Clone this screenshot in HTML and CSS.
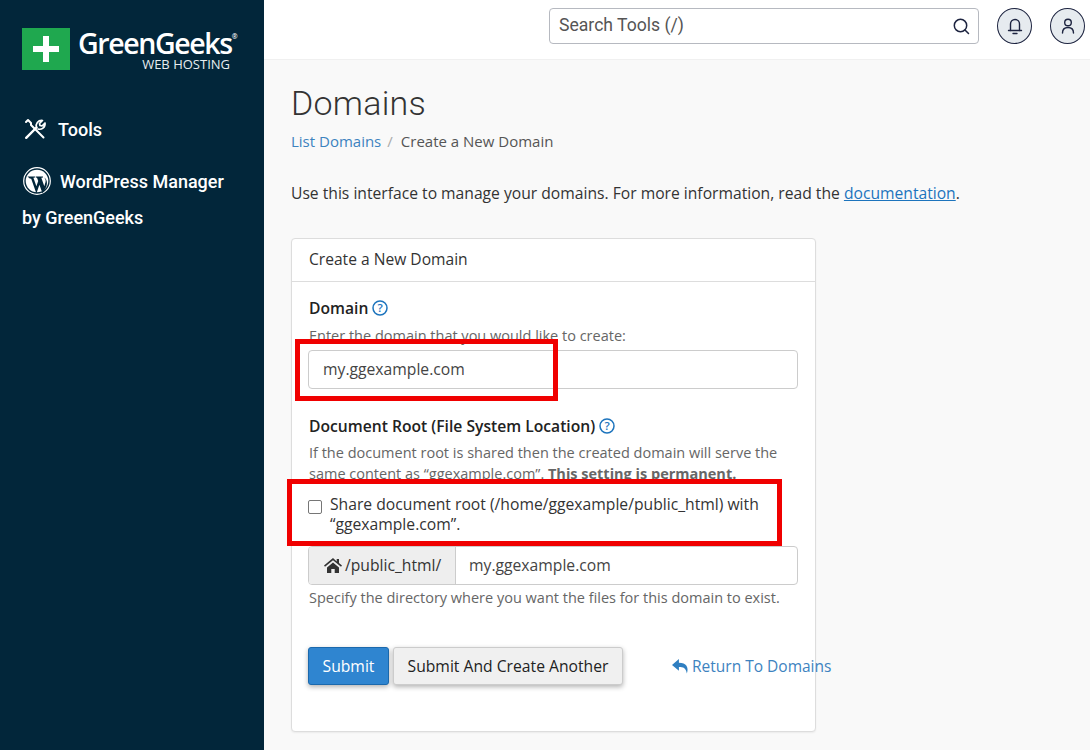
FILE: index.html
```html
<!DOCTYPE html>
<html lang="en">
<head>
<meta charset="utf-8">
<title>Domains</title>
<link rel="stylesheet" href="styles.css">
</head>
<body>
<div class="app">
  <aside class="sidebar">
    <div class="logo">
      <div class="logo-mark">
        <svg width="26" height="26" viewBox="0 0 26 26"><path d="M10 0h6v10h10v6H16v10h-6V16H0v-6h10z" fill="#fff"/></svg>
      </div>
      <div class="logo-text">
        <div class="logo-name">GreenGeeks<sup class="logo-reg">®</sup></div>
        <div class="logo-sub">WEB HOSTING</div>
      </div>
    </div>
    <nav class="nav">
      <a class="nav-tools">
        <svg class="tools-icon" width="24" height="24" viewBox="0 0 24 24" fill="none" stroke="#fff" stroke-linecap="round" stroke-linejoin="round"><path d="M3 5l2-2 3 3v2L20.500 20.500" stroke-width="2"/><path d="M3.200 20.800 13.500 10.500" stroke-width="2.400"/><path d="M13.500 10.500c-1.300-3.500 1.500-7.500 6-7l-3 3 .5 2 2 .5 3-3c.5 4.500-3.500 7-7 6" stroke-width="1.700"/></svg>
        <span>Tools</span>
      </a>
      <a class="nav-wp">
        <span class="wp-line">
          <svg class="wp-icon" width="28" height="28" viewBox="0 0 28 28"><circle cx="14" cy="14" r="13.300" fill="none" stroke="#fff" stroke-width="1.200"/><circle cx="14" cy="14" r="11.300" fill="#fff"/><path d="M4.500 9.500h7.500v1l-1.600.2 3 8.600 1.800-5.300-1.200-3.300-1.300-.2v-1h7.300v1l-1.700.2 3 8.500 1.200-4c.4-1.600.2-2.800-1.300-4.700 3 1.500 3.500 6.500 1.800 9.700l-3.400 6.300-3.200-8.800-3 8.800-5.200-14.800-1.500-.2z" fill="#02263a"/></svg>
          <span>WordPress Manager</span>
        </span>
        <span class="wp-by">by GreenGeeks</span>
      </a>
    </nav>
  </aside>
  <div class="main">
    <header class="topbar">
      <div class="search">
        <span class="search-text">Search Tools (/)</span>
        <svg width="18" height="18" viewBox="0 0 18 18" fill="none" stroke="#1d2440" stroke-width="1.500" stroke-linecap="round"><circle cx="8.500" cy="8.500" r="6.200"/><path d="m13 13 3.500 3.500"/></svg>
      </div>
      <button class="round-btn" type="button" aria-label="Notifications">
        <svg width="18" height="20" viewBox="0 0 18 20" fill="none" stroke="#1d2440" stroke-width="1.400" stroke-linecap="round"><path d="M4.500 14.500V8a4.500 4.500 0 0 1 9 0v6.500"/><path d="M2.500 14.500h13"/><path d="M7 17.500h4"/></svg>
      </button>
      <button class="round-btn" type="button" aria-label="Account">
        <svg width="18" height="20" viewBox="0 0 18 20" fill="none" stroke="#1d2440" stroke-width="1.400" stroke-linecap="round"><circle cx="9" cy="6.500" r="3.300"/><path d="M3.500 17c0-3.500 2-5.500 5.500-5.500s5.500 2 5.500 5.500"/></svg>
      </button>
    </header>
    <main class="content">
      <h1 class="title">Domains</h1>
      <div class="crumbs"><a class="link-plain">List Domains</a><span class="crumb-sep">/</span><span>Create a New Domain</span></div>
      <p class="intro">Use this interface to manage your domains. For more information, read the <a class="link-doc">documentation</a>.</p>
      <section class="card">
        <div class="card-head">Create a New Domain</div>
        <div class="card-body">
          <div class="label">Domain <svg class="help" width="16" height="16" viewBox="0 0 16 16"><circle cx="8" cy="8" r="7" fill="none" stroke="#1d74bd" stroke-width="1.500"/><text x="8" y="12" class="help-q">?</text></svg></div>
          <div class="hint hint-domain">Enter the domain that you would like to create:</div>
          <div class="field">my.ggexample.com</div>
          <div class="label label-root">Document Root (File System Location) <svg class="help" width="16" height="16" viewBox="0 0 16 16"><circle cx="8" cy="8" r="7" fill="none" stroke="#1d74bd" stroke-width="1.500"/><text x="8" y="12" class="help-q">?</text></svg></div>
          <div class="hint hint-root">If the document root is shared then the created domain will serve the same content as “ggexample.com”. <b>This setting is permanent.</b></div>
          <label class="check">
            <span class="check-box"></span>
            <span>Share document root (/home/ggexample/public_html) with “ggexample.com”.</span>
          </label>
          <div class="group">
            <span class="addon">
              <svg width="18" height="15" viewBox="0 0 18 15"><path d="M9 0 0 7.500l1 1.300L9 2.200l8 6.600 1-1.300-3-2.500V1h-2.300v2.500zM3 9.500V15h4.300v-4h3.400v4H15V9.500L9 4.500z" fill="#333"/></svg>
              /public_html/
            </span>
            <span class="group-value">my.ggexample.com</span>
          </div>
          <div class="hint hint-spec">Specify the directory where you want the files for this domain to exist.</div>
          <div class="actions">
            <button class="btn btn-primary" type="button">Submit</button>
            <button class="btn btn-default" type="button">Submit And Create Another</button>
            <a class="return">
              <svg width="17" height="15" viewBox="0 0 16 14"><path d="M6.500 0 0 5.500 6.500 11V7.500c4 0 6.500.8 7.500 6 2-5.500-.5-10-7.500-10z" fill="#2f7fc1"/></svg>
              Return To Domains
            </a>
          </div>
        </div>
      </section>
    </main>
  </div>
</div>
<div class="mark mark-domain"></div>
<div class="mark mark-share"></div>
</body>
</html>
```
FILE: styles.css
```css
* { box-sizing: border-box; }
html, body { margin: 0; height: 100%; overflow: hidden; }
body { font-family: "Open Sans", sans-serif; font-size: 14px; color: #333; background: #f9f9f9; }
.app { display: flex; height: 750px; }

.sidebar { width: 264px; flex: none; background: #02263a; color: #fff; font-family: Roboto, sans-serif; padding: 28px 0 0 22px; }
.logo { display: flex; align-items: flex-start; }
.logo-mark { width: 48px; height: 42px; background: #1fa84f; display: flex; align-items: center; justify-content: center; }
.logo-text { margin-left: 8px; width: 165px; }
.logo-name { font-family: "Open Sans", sans-serif; font-weight: 600; font-size: 28.500px; line-height: 30px; letter-spacing: -1.400px; white-space: nowrap; }
.logo-reg { font-size: 7px; letter-spacing: 0; vertical-align: 15px; line-height: 0; }
.logo-sub { font-family: "Open Sans", sans-serif; font-size: 13px; line-height: 14px; text-align: right; padding-right: 13px; color: #e8edf0; margin-top: -1px; }
.nav { margin-top: 46px; font-size: 18px; font-weight: 500; }
.nav-tools { display: flex; align-items: center; gap: 11px; height: 24px; }
.tools-icon { margin-left: 1px; }
.nav-wp { display: block; margin-top: 26px; }
.wp-line { display: flex; align-items: center; gap: 9px; height: 28px; padding-left: 1px; }
.wp-by { display: block; margin-top: 12px; line-height: 21px; }

.main { flex: 1; min-width: 0; display: flex; flex-direction: column; }
.topbar { height: 60px; background: #fff; border-bottom: 1px solid #f0f0f0; display: flex; align-items: flex-start; padding: 8px 0 0 285px; flex: none; }
.search { width: 430px; height: 36px; border: 1px solid #b6b9c0; border-radius: 4px; display: flex; align-items: center; justify-content: space-between; padding: 0 8px 0 9px; }
.search-text { font-family: Roboto, sans-serif; font-size: 17.600px; line-height: 30px; padding-bottom: 2px; color: #555; }
.round-btn { width: 35px; height: 36px; padding: 0; margin-left: 18px; border: 1px solid #1d2440; border-radius: 50%; background: #e6ebef; display: flex; align-items: center; justify-content: center; flex: none; }
.round-btn + .round-btn { margin-left: 18px; }

.content { flex: 1; padding: 0 0 0 27px; }
.title { margin: 24px 0 0; font-family: Roboto, sans-serif; font-weight: 300; font-size: 34px; line-height: 38px; color: #333; letter-spacing: .25px; }
.crumbs { margin-top: 9px; font-size: 15px; line-height: 20px; color: #555; }
.link-plain { color: #3d83bf; }
.crumb-sep { color: #aaa; margin: 0 8px 0 6px; }
.intro { margin: 31px 0 0; font-size: 15.670px; line-height: 22px; color: #333; }
.link-doc { color: #1d74bd; text-decoration: underline; }

.card { width: 525px; height: 494px; margin-top: 34px; background: #fff; border: 1px solid #ddd; border-radius: 4px; box-shadow: 0 1px 2px rgba(0,0,0,.06); }
.card-head { height: 43px; border-bottom: 1px solid #ddd; padding: 0 17px; font-size: 15.600px; line-height: 41px; color: #333; }
.card-body { padding: 0 17px 0 16px; }
.label { font-size: 15.670px; line-height: 22px; font-weight: 600; color: #222; margin-top: 15px; display: flex; align-items: center; gap: 4px; padding-left: 1px; }
.help { flex: none; }
.help-q { font-family: "Open Sans", sans-serif; font-size: 11.500px; font-weight: 600; text-anchor: middle; fill: #1d74bd; }
.hint { font-size: 14.500px; line-height: 21px; color: #666; padding-left: 1px; }
.hint-domain { margin-top: 6px; }
.field { width: 490px; height: 39px; margin-top: 4px; border: 1px solid #ccc; border-radius: 4px; padding: 0 14px; font-size: 15.700px; line-height: 36px; color: #444; }
.label-root { margin-top: 26px; }
.hint-root { margin-top: 5px; }
.check { display: flex; align-items: flex-start; gap: 8px; margin-top: 10px; font-size: 15.700px; line-height: 20px; color: #333; }
.check-box { width: 14px; height: 14px; margin-top: 6px; flex: none; border: 1px solid #767676; border-radius: 2px; background: #fff; }
.group { display: flex; width: 490px; height: 39px; margin-top: 12px; border: 1px solid #ccc; border-radius: 4px; font-size: 15.700px; line-height: 37px; color: #333; overflow: hidden; }
.addon { display: flex; align-items: center; gap: 3px; width: 147px; padding-left: 15px; background: #eee; border-right: 1px solid #ccc; flex: none; }
.group-value { padding-left: 13px; color: #444; }
.hint-spec { margin-top: 2px; }
.actions { display: flex; align-items: center; margin-top: 39px; }
.btn { font-family: "Open Sans", sans-serif; font-size: 15.700px; height: 38px; border-radius: 3px; padding: 0; flex: none; box-shadow: 0 2px 5px rgba(0,0,0,.3); }
.btn-primary { width: 81px; background: #2f85d0; border: 1px solid #1b69ad; color: #fff; }
.btn-default { width: 230px; margin-left: 4px; background: #f0f0f0; border: 1px solid #ccc; color: #222; }
.return { display: flex; align-items: center; gap: 3px; margin-left: 49px; font-size: 15.500px; color: #3d83bf; white-space: nowrap; }

.mark { position: absolute; border: 5px solid #f00000; }
.mark-domain { left: 295px; top: 339px; width: 263px; height: 62px; }
.mark-share { left: 287px; top: 479px; width: 495px; height: 67px; }
```
